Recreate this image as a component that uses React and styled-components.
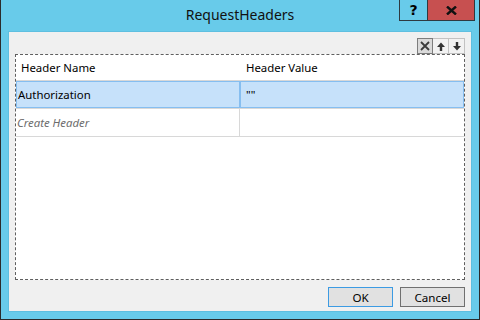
import styled, { createGlobalStyle } from "styled-components";

const GlobalStyle = createGlobalStyle`
  html, body {
    margin: 0;
    padding: 0;
    background: #ffffff;
  }
  * {
    box-sizing: border-box;
  }
`;

const Window = styled.div`
  width: 480px;
  height: 320px;
  display: flex;
  flex-direction: column;
  background: #68cbea;
  border: 1px solid #2b2b2b;
  border-top: none;
  font-family: "Noto Sans", "Open Sans", sans-serif;
  color: #000;
`;

const TitleBar = styled.div`
  height: 31px;
  display: grid;
  grid-template-columns: 1fr auto 1fr;
  align-items: start;
`;

const Title = styled.div`
  grid-column: 2;
  font-size: 14px;
  line-height: 30px;
  color: #111;
`;

const CaptionButtons = styled.div`
  grid-column: 3;
  justify-self: end;
  display: flex;
  margin-right: 4px;
`;

const CaptionButton = styled.div`
  width: ${(p) => p.$width}px;
  height: 21px;
  display: flex;
  align-items: center;
  justify-content: center;
  background: ${(p) => p.$bg};
  border: 1px solid #2e3a40;
  border-top: none;
  ${(p) => (p.$joined ? "border-right: none;" : "")}
  font-weight: 700;
  font-size: 14px;
  font-family: "DejaVu Sans", sans-serif;
`;

const Client = styled.div`
  flex: 1;
  margin: 0 7px 7px 7px;
  display: flex;
  flex-direction: column;
  padding: 6px 6px 4px 6px;
  background: #f0f0f0;
  border: 1px solid #5ebfe0;
`;

const Toolbar = styled.div`
  display: flex;
  justify-content: flex-end;
  height: 16px;
`;

const ToolButton = styled.div`
  width: 16px;
  height: 16px;
  display: flex;
  align-items: center;
  justify-content: center;
  background: ${(p) => (p.$active ? "#dadada" : "#f2f2f2")};
  border: 1px solid ${(p) => (p.$active ? "#7d7d7d" : "#c2c2c2")};
  ${(p) => (p.$joined ? "border-left: none;" : "")}
`;

const Grid = styled.div`
  flex: 1;
  background: #ffffff;
  border: 1px dashed #5f5f5f;
  display: flex;
  flex-direction: column;
`;

const Row = styled.div`
  display: grid;
  grid-template-columns: 224px 224px;
  height: ${(p) => (p.$header ? 26 : 28)}px;
  border-bottom: 1px solid #d8d8d8;
`;

const Cell = styled.div`
  display: flex;
  align-items: center;
  font-size: 11.4px;
  padding-left: ${(p) => p.$pad}px;
  white-space: nowrap;
  ${(p) =>
    p.$selected
      ? `background: #c6e1fa; border: 1px solid #86bef0;`
      : ""}
  ${(p) => (p.$divider ? "border-right: 1px solid #d8d8d8;" : "")}
  ${(p) => (p.$placeholder ? "font-style: italic; color: #6d6d6d;" : "")}
`;

const Footer = styled.div`
  display: flex;
  justify-content: flex-end;
  gap: 7px;
  margin-top: 7px;
`;

const Button = styled.button`
  width: 65px;
  height: 20px;
  padding: 0;
  font-family: "Noto Sans", "Open Sans", sans-serif;
  font-size: 11.6px;
  color: #000;
  background: #e1e1e1;
  border: 1px solid ${(p) => (p.$default ? "#3c9be3" : "#707070")};
  border-radius: 0;
`;

const XIcon = () => (
  <svg width="10" height="10" viewBox="0 0 10 10">
    <path d="M1 1 L9 9 M9 1 L1 9" stroke="#3a3a3a" strokeWidth="1.8" />
  </svg>
);

const ArrowIcon = ({ down }) => (
  <svg width="8" height="9" viewBox="0 0 8 9" style={down ? { transform: "rotate(180deg)" } : undefined}>
    <path d="M4 0.5 L8 5 L5.2 5 L5.2 9 L2.8 9 L2.8 5 L0 5 Z" fill="#333" />
  </svg>
);

const CloseGlyph = () => (
  <svg width="11" height="9" viewBox="0 0 11 9">
    <path d="M1 0.5 L10 8.5 M10 0.5 L1 8.5" stroke="#111" strokeWidth="2.4" />
  </svg>
);

export default function App() {
  return (
    <>
      <GlobalStyle />
      <Window>
        <TitleBar>
          <Title>RequestHeaders</Title>
          <CaptionButtons>
            <CaptionButton $width={28} $bg="#68cbea" $joined>?</CaptionButton>
            <CaptionButton $width={48} $bg="#c75050">
              <CloseGlyph />
            </CaptionButton>
          </CaptionButtons>
        </TitleBar>
        <Client>
          <Toolbar>
            <ToolButton $active>
              <XIcon />
            </ToolButton>
            <ToolButton $joined>
              <ArrowIcon />
            </ToolButton>
            <ToolButton $joined>
              <ArrowIcon down />
            </ToolButton>
          </Toolbar>
          <Grid>
            <Row $header>
              <Cell $pad={5}>Header Name</Cell>
              <Cell $pad={6}>Header Value</Cell>
            </Row>
            <Row>
              <Cell $pad={1} $selected>Authorization</Cell>
              <Cell $pad={5} $selected>""</Cell>
            </Row>
            <Row>
              <Cell $pad={1} $divider $placeholder>Create Header</Cell>
              <Cell $pad={6}></Cell>
            </Row>
          </Grid>
          <Footer>
            <Button $default>OK</Button>
            <Button>Cancel</Button>
          </Footer>
        </Client>
      </Window>
    </>
  );
}
